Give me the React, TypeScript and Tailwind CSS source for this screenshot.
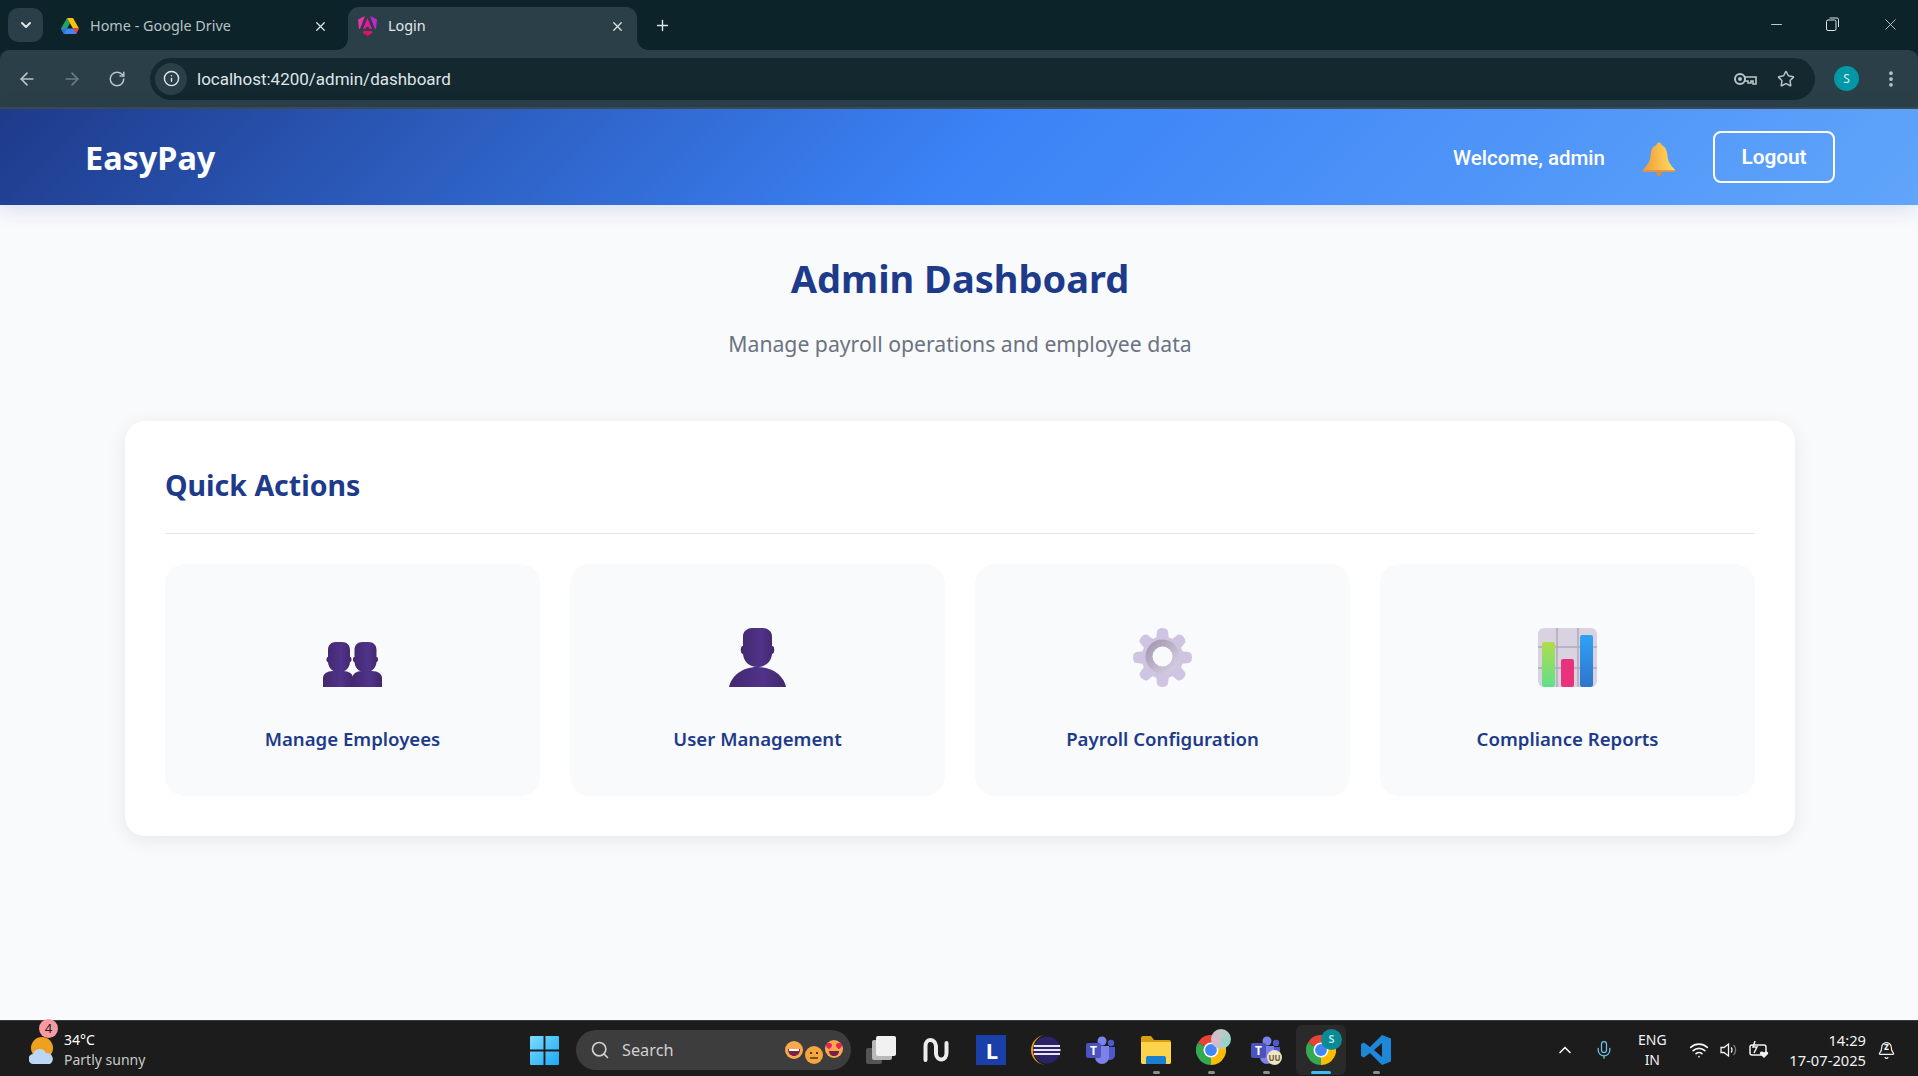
import { ArrowLeft, ArrowRight, Bell, ChevronDown, ChevronUp, EllipsisVertical, Info, Mic, Minus, Plus, RotateCw, Search, Star, Wifi, X } from 'lucide-react';

const segoe = 'font-["Noto_Sans","Open_Sans",sans-serif]';

function DriveIcon() {
  return (
    <svg width="18" height="16" viewBox="0 0 18 16">
      <path d="M6 0 0 10.500 3 16 9 5.200z" fill="#1fa463" />
      <path d="M6 0h6l6 10.500h-6z" fill="#ffc107" />
      <path d="M0 10.500h18L15 16H3z" fill="#4285f4" />
      <path d="M0 10.500h6L3 16z" fill="#2a71d8" />
      <path d="M12 10.500h6L15 16z" fill="#ea4335" />
    </svg>
  );
}

function AngularIcon() {
  return (
    <svg width="19" height="20" viewBox="0 0 19 20">
      <path d="M0 3.500 7 0 2 13 1 13z" fill="#e535ab" />
      <path d="M19 3.500 12 0 17 13 18 13z" fill="#c026d3" />
      <path d="M9.500 2 14 13H11.500L10.700 11H8.300L7.500 13H5z" fill="#f012a0" />
      <path d="M5 15h9v2l-4.500 3L5 17z" fill="#e5125f" />
    </svg>
  );
}

function BrowserChrome() {
  return (
    <div className={`${segoe} shrink-0 bg-[#0c2329]`}>
      <div className="flex h-[50px] items-start pl-[8px] text-[#dfe5e7]">
        <div className="mt-[8px] flex h-[34px] w-[35px] items-center justify-center rounded-[10px] bg-[#2a3f47]">
          <ChevronDown size={16} strokeWidth={3} />
        </div>
        <div className="ml-[8px] flex h-[43px] w-[289px] items-center pb-[5px] pl-[10px] pr-[12px] mt-[7px] text-[#b7c2c5]">
          <span className="flex w-[18px] justify-center"><DriveIcon /></span>
          <span className="ml-[11px] flex-1 text-[14.400px]">Home - Google Drive</span>
          <X size={15} strokeWidth={2} className="text-[#dfe5e7]" />
        </div>
        <div className="relative ml-[8px] mt-[7px] flex h-[43px] w-[289px] items-center rounded-t-[11px] bg-[#2a3f47] pb-[5px] pl-[10px] pr-[12px] text-[#e3e8ea]">
          <span className="absolute bottom-0 left-[-11px] h-[11px] w-[11px] bg-[radial-gradient(circle_at_0_0,transparent_10.500px,#2a3f47_11px)]" />
          <span className="absolute bottom-0 right-[-11px] h-[11px] w-[11px] bg-[radial-gradient(circle_at_100%_0,transparent_10.500px,#2a3f47_11px)]" />
          <span className="flex w-[19px] justify-center"><AngularIcon /></span>
          <span className="ml-[11px] flex-1 text-[14.400px]">Login</span>
          <X size={15} strokeWidth={2} className="text-[#dfe5e7]" />
        </div>
        <Plus size={17} strokeWidth={2} className="ml-[17px] mt-[17px]" />
        <div className="ml-auto flex h-[48px] items-center">
          <Minus size={17} strokeWidth={1.200} />
          <svg width="13" height="14" viewBox="0 0 13 14" fill="none" stroke="#dfe5e7" strokeWidth="1" className="ml-[41px]">
            <rect x="0.500" y="3" width="9.500" height="10.500" rx="1.500" />
            <path d="M3.500 1h7.500a1.500 1.500 0 0 1 1.500 1.500V10" />
          </svg>
          <X size={19} strokeWidth={1} className="ml-[42px] mr-[18px]" />
        </div>
      </div>
      <div className="flex h-[57px] items-center rounded-t-[9px] bg-[#2a3f47] text-[#b9c5c8]">
        <ArrowLeft size={20} strokeWidth={2} className="ml-[17px]" />
        <ArrowRight size={20} strokeWidth={2} className="ml-[25px] text-[#6c7d83]" />
        <RotateCw size={18} strokeWidth={2} className="ml-[26px]" />
        <div className="ml-[24px] flex h-[42px] w-[1665px] items-center rounded-full bg-[#14282f] pl-[5px] pr-[20px]">
          <div className="flex h-[32px] w-[32px] items-center justify-center rounded-full bg-[#2a3f47]">
            <Info size={17} strokeWidth={2} className="text-[#dfe5e7]" />
          </div>
          <span className="ml-[10px] mt-[2px] font-['Roboto',sans-serif] text-[17px] text-[#dfe5e7]">localhost:4200/admin/dashboard</span>
          <svg width="23" height="14" viewBox="0 0 23 14" fill="none" stroke="currentColor" strokeWidth="2" className="ml-auto">
            <circle cx="6" cy="7" r="5" />
            <circle cx="6" cy="7" r="1" />
            <path d="M11 5h11v7h-3V9h-2v2h-3V9h-3" strokeWidth="1.600" />
          </svg>
          <Star size={18} strokeWidth={2} className="ml-[20px]" />
        </div>
        <div className="ml-[19px] flex h-[25px] w-[25px] items-center justify-center rounded-full bg-[#0097a7] text-[12px] text-[#d7f3f6]">S</div>
        <EllipsisVertical size={20} strokeWidth={2.500} className="ml-[22px]" />
      </div>
      <div className="h-[2px] bg-[#3f4a4e]" />
    </div>
  );
}

function GoldBell() {
  return (
    <svg width="34" height="34" viewBox="0 0 34 34">
      <defs>
        <linearGradient id="bell" x1="0" x2="1" y1="0" y2="0">
          <stop offset="0" stopColor="#f09a3a" />
          <stop offset="1" stopColor="#ffdf5e" />
        </linearGradient>
      </defs>
      <path d="M14.500 3a2.500 2.500 0 0 1 5 0c4 1.500 5.500 5 6 11 .4 5 2.500 8.500 8 14.500H.5c5.500-6 7.600-9.500 8-14.500.5-6 2-9.500 6-11z" fill="url(#bell)" />
      <path d="M.5 28.500h33l-1 1.500H1.500z" fill="#ed9038" />
      <circle cx="17" cy="31.500" r="2.500" fill="#e58a34" />
    </svg>
  );
}

function BustDefs() {
  return (
    <defs>
      <linearGradient id="bust" x1="0" x2="1" y1="0" y2="0">
        <stop offset="0" stopColor="#43286f" />
        <stop offset="0.600" stopColor="#50338a" />
        <stop offset="1" stopColor="#42276c" />
      </linearGradient>
    </defs>
  );
}

function UsersIcon() {
  const head = 'M0 8c0-5 3-8 8-8h6c5 0 8 3 8 8v7c2-.5 2 5.500 0 5-.5 6-4 10-11 10S.5 26 0 20c-2 .5-2-5.500 0-5z';
  return (
    <svg width="59" height="59" viewBox="0 0 59 59">
      <BustDefs />
      <path d="M0 59V50c0-4 4-7 10-7h10c6 0 10 3 10 7v9z" fill="url(#bust)" />
      <path d="M29.500 59V50c0-4 3.500-7 9.500-7h10c6 0 10 3 10 7v9z" fill="url(#bust)" />
      <g transform="translate(5 14)"><path d={head} fill="url(#bust)" /></g>
      <g transform="translate(31.500 14)"><path d={head} fill="url(#bust)" /></g>
    </svg>
  );
}

function UserIcon() {
  return (
    <svg width="57" height="59" viewBox="0 0 57 59">
      <BustDefs />
      <path d="M0 59c2-10 12-20 28.500-20S55 49 57 59z" fill="url(#bust)" />
      <path d="M14 8c0-5 5-8 9-8h11c4 0 9 3 9 8v10c3-1 3 8.500 0 8-.5 7-6 13-14.500 13S14.500 33 14 26c-3 .5-3-9 0-8z" fill="url(#bust)" />
    </svg>
  );
}

function GearIcon() {
  const teeth = [0, 45, 90, 135, 180, 225, 270, 315];
  return (
    <svg width="59" height="59" viewBox="0 0 59 59">
      <defs>
        <linearGradient id="ring" x1="0" x2="1" y1="0" y2="1">
          <stop offset="0" stopColor="#9d92ad" />
          <stop offset="1" stopColor="#dcd5e6" />
        </linearGradient>
      </defs>
      {teeth.map((a) => (
        <path key={a} d="M23 12 24 3.500a5.500 3.500 0 0 1 11 0L36 12z" fill="#cfc4e2" transform={`rotate(${a} 29.500 29.500)`} />
      ))}
      <circle cx="29.500" cy="29.500" r="21" fill="#cfc4e2" />
      <circle cx="29.500" cy="28.500" r="17" fill="url(#ring)" />
      <circle cx="29.500" cy="28.500" r="10" fill="#f8fafc" />
    </svg>
  );
}

function ChartIcon() {
  return (
    <svg width="59" height="59" viewBox="0 0 59 59">
      <defs>
        <linearGradient id="g1" x1="0" x2="0" y1="0" y2="1">
          <stop offset="0" stopColor="#b2dc4c" />
          <stop offset="1" stopColor="#5fe08a" />
        </linearGradient>
        <linearGradient id="g2" x1="0" x2="0" y1="0" y2="1">
          <stop offset="0" stopColor="#2fa3f5" />
          <stop offset="1" stopColor="#2f74c9" />
        </linearGradient>
        <clipPath id="chartClip">
          <rect width="59" height="59" rx="6" />
        </clipPath>
      </defs>
      <g clipPath="url(#chartClip)">
        <rect width="59" height="59" fill="#d9d2e0" />
        <path d="M19 0v59M40 0v59M0 19h59M0 40h59" stroke="#b1a8b8" strokeWidth="1.500" />
        <rect x="4" y="14" width="13" height="45" rx="2" fill="url(#g1)" />
        <rect x="23" y="31" width="13" height="28" rx="2" fill="#e8337c" />
        <rect x="42" y="7" width="13" height="52" rx="2" fill="url(#g2)" />
      </g>
    </svg>
  );
}

const actions = [
  { label: 'Manage Employees', icon: <UsersIcon /> },
  { label: 'User Management', icon: <UserIcon /> },
  { label: 'Payroll Configuration', icon: <GearIcon /> },
  { label: 'Compliance Reports', icon: <ChartIcon /> },
];

function Page() {
  return (
    <div className={`${segoe} flex min-h-0 flex-1 flex-col bg-[#f8fafc]`}>
      <header className="flex h-[96px] shrink-0 items-center bg-[linear-gradient(135deg,#1e3a8a_0%,#3b82f6_50%,#60a5fa_100%)] pl-[85px] pr-[83px] text-white shadow-[0_4px_20px_rgba(30,58,138,0.15)]">
        <span className="mt-[1px] text-[32.400px] font-bold">EasyPay</span>
        <span className="ml-auto mt-[2px] font-['Roboto',sans-serif] text-[20.500px] font-medium">Welcome, admin</span>
        <span className="mx-[37px] mt-[3px] flex">
          <GoldBell />
        </span>
        <button className="h-[52px] w-[122px] rounded-[8px] border-2 border-white pt-[1px] font-['Roboto',sans-serif] text-[20.800px] font-semibold">Logout</button>
      </header>
      <main className="flex-1 pl-[2px]">
        <h1 className="mt-[46px] text-center text-[38px] font-bold leading-[54px] text-[#1e3a8a]">Admin Dashboard</h1>
        <p className="mt-[23px] text-center text-[21.200px] leading-[32px] text-[#6b7280]">Manage payroll operations and employee data</p>
        <section className="mx-auto mt-[61px] w-[1670px] rounded-[20px] bg-white p-[40px] shadow-[0_4px_20px_rgba(0,0,0,0.08)]">
          <h2 className="border-b border-[#e5e7eb] pb-[25px] pt-[2px] text-[28.500px] font-bold leading-[45px] text-[#1e3a8a]">Quick Actions</h2>
          <div className="mt-[30px] grid grid-cols-4 gap-[30px]">
            {actions.map((a) => (
              <div key={a.label} className="flex h-[232px] flex-col items-center rounded-[20px] bg-[#f8fafc] pt-[64px]">
                <div className="flex h-[59px] items-center justify-center">{a.icon}</div>
                <div className="mt-[38px] text-[18.600px] font-semibold leading-[28px] text-[#1e3a8a]">{a.label}</div>
              </div>
            ))}
          </div>
        </section>
      </main>
    </div>
  );
}

function ChromeGlyph() {
  return (
    <svg width="30" height="30" viewBox="0 0 32 32">
      <path d="M16 16 2.100 8A16 16 0 0 1 29.900 8z" fill="#ea4335" />
      <path d="M16 16 2.100 8A16 16 0 0 0 16 32z" fill="#34a853" />
      <path d="M16 16 29.900 8A16 16 0 0 1 16 32z" fill="#fbbc04" />
      <circle cx="16" cy="16" r="8" fill="#fff" />
      <circle cx="16" cy="16" r="6.300" fill="#4285f4" />
    </svg>
  );
}

function TeamsGlyph() {
  return (
    <svg width="30" height="28" viewBox="0 0 30 28">
      <circle cx="16" cy="5" r="4.500" fill="#7b83eb" />
      <circle cx="25" cy="7" r="3.200" fill="#5059c9" />
      <path d="M20 11h9v8a5 5 0 0 1-5 5h-4z" fill="#5059c9" />
      <path d="M9 10h14v11a7 7 0 0 1-14 0z" fill="#7b83eb" />
      <rect x="0" y="7" width="15" height="15" rx="2" fill="#4b53bc" />
      <text x="7.500" y="19" textAnchor="middle" fontSize="12" fontWeight="700" fill="#fff" fontFamily="Noto Sans, sans-serif">T</text>
    </svg>
  );
}

function Slot({ children, dot, active }: { children: React.ReactNode; dot?: boolean; active?: boolean }) {
  return (
    <div className="relative flex h-[50px] w-[55px] items-center justify-center">
      {active && <span className="absolute inset-y-0 left-[2.500px] w-[50px] rounded-[6px] bg-[#2a2a2a]" />}
      <span className="relative flex">{children}</span>
      {dot && <span className="absolute bottom-[1px] h-[3px] w-[7px] rounded-full bg-[#8e8e8e]" />}
      {active && <span className="absolute bottom-[1px] h-[3px] w-[20px] rounded-full bg-[#3fbdf6]" />}
    </div>
  );
}

function Face({ mood }: { mood: 'grin' | 'flat' | 'love' }) {
  return (
    <svg width="18" height="18" viewBox="0 0 18 18">
      <circle cx="9" cy="9" r="9" fill={mood === 'flat' ? '#f5a63d' : '#f8a94f'} />
      {mood === 'grin' && <path d="M3 8h12c0 5-3 7-6 7s-6-2-6-7z" fill="#7b1f4a" />}
      {mood === 'grin' && <path d="M4 8h10v2H4z" fill="#fff" />}
      {mood === 'flat' && <path d="M5 12h8" stroke="#5b3316" strokeWidth="1.500" />}
      {mood === 'flat' && <path d="M5 7h2M11 7h2" stroke="#5b3316" strokeWidth="2" />}
      {mood === 'love' && <path d="M1 5c1-3 5-3 6 0 .5 2-3 4-3 4S.5 7 1 5zM11 5c1-3 5-3 6 0 .5 2-3 4-3 4s-3.500-2-3-4z" fill="#e8225f" />}
      {mood === 'love' && <path d="M4 11h10c0 3-2 5-5 5s-5-2-5-5z" fill="#7b1f4a" />}
    </svg>
  );
}

function Taskbar() {
  return (
    <footer className={`${segoe} flex h-[56px] shrink-0 items-center border-t border-[#3a3a3a] bg-[#1c1c1c] pt-[3px] text-white`}>
      <div className="relative flex w-[517px] shrink-0 items-center pl-[29px]">
        <svg width="26" height="27" viewBox="0 0 26 27">
          <circle cx="13" cy="11" r="11" fill="#f0a020" />
          <path d="M5 27a5 5 0 0 1-1-10 7 7 0 0 1 13-1 6 6 0 0 1 4 11z" fill="#bcd7f5" />
        </svg>
        <span className="absolute left-[39px] top-[-11px] flex h-[19px] w-[19px] items-center justify-center rounded-full bg-[#f79aa2] text-[13px] text-[#1c1c1c]">4</span>
        <div className="ml-[9px] text-[14px] leading-[20px]">
          <div>34°C</div>
          <div className="text-[#c9c9c9]">Partly sunny</div>
        </div>
      </div>
      <div className="flex items-center">
        <div className="flex w-[55px] justify-center">
          <svg width="29" height="29" viewBox="0 0 30 30">
            <defs>
              <linearGradient id="win" x1="0" x2="1" y1="0" y2="1">
                <stop offset="0" stopColor="#7ddcff" />
                <stop offset="1" stopColor="#1aa9f5" />
              </linearGradient>
            </defs>
            <path d="M0 1a1 1 0 0 1 1-1h13v14H0zM16 0h13a1 1 0 0 1 1 1v13H16zM0 16h14v14H1a1 1 0 0 1-1-1zM16 16h14v13a1 1 0 0 1-1 1H16z" fill="url(#win)" />
          </svg>
        </div>
        <div className="ml-[4px] flex h-[40px] w-[275px] items-center rounded-full bg-[#3d3d3d] pl-[14px] pr-[8px] text-[#d0d0d0]">
          <Search size={20} strokeWidth={2} />
          <span className="ml-[12px] text-[16.300px]">Search</span>
          <div className="ml-auto flex items-center gap-[2px]">
            <span className="flex"><Face mood="grin" /></span>
            <span className="flex translate-y-[5px]"><Face mood="flat" /></span>
            <span className="flex -translate-y-[1px]"><Face mood="love" /></span>
          </div>
        </div>
        <div className="ml-[2.500px]">
          <Slot>
            <svg width="30" height="28" viewBox="0 0 30 28">
              <rect x="0" y="12" width="16" height="16" rx="2" fill="#555" />
              <rect x="6" y="4" width="20" height="20" rx="2" fill="#b8b8b8" />
              <rect x="10" y="0" width="20" height="20" rx="2" fill="#f1f1f1" />
            </svg>
          </Slot>
        </div>
        <Slot>
          <svg width="26" height="26" viewBox="0 0 26 26" fill="none" stroke="#ececec" strokeWidth="4" strokeLinecap="round">
            <path d="M2.500 23V9c0-8 9.500-8 10.500 0v8c1 8 10.500 7 10.500-1V6" />
          </svg>
        </Slot>
        <Slot>
          <svg width="30" height="30" viewBox="0 0 30 30">
            <rect width="30" height="30" fill="#1b3fa8" />
            <text x="16" y="24" textAnchor="middle" fontSize="22" fontWeight="700" fill="#fff" fontFamily="Noto Sans, sans-serif">L</text>
          </svg>
        </Slot>
        <Slot>
          <svg width="30" height="30" viewBox="0 0 30 30">
            <path d="M15 0a15 15 0 0 0 0 30 13 15 0 0 1 0-30z" fill="#f29a1f" />
            <circle cx="16" cy="15" r="13.500" fill="#2b2367" />
            <path d="M3 11h26M2.500 15h27M3 19h26" stroke="#e6e3f2" strokeWidth="2" />
          </svg>
        </Slot>
        <Slot>
          <TeamsGlyph />
        </Slot>
        <Slot dot>
          <svg width="30" height="28" viewBox="0 0 30 28">
            <path d="M0 2a2 2 0 0 1 2-2h8l3 4h15a2 2 0 0 1 2 2v20a2 2 0 0 1-2 2H2a2 2 0 0 1-2-2z" fill="#d99e12" />
            <path d="M0 6h30v20a2 2 0 0 1-2 2H2a2 2 0 0 1-2-2z" fill="#fcd34d" />
            <path d="M5 22a2 2 0 0 1 2-2h16a2 2 0 0 1 2 2v6H5z" fill="#1a7fd0" />
          </svg>
        </Slot>
        <Slot dot>
          <ChromeGlyph />
          <span className="absolute right-[-5px] top-[-6px] h-[20px] w-[20px] rounded-full bg-[conic-gradient(#c6c6c6,#8fd4c8,#d8b8d0,#c6c6c6)]" />
        </Slot>
        <Slot dot>
          <TeamsGlyph />
          <span className="absolute bottom-[-1px] right-[-1px] flex h-[15px] w-[15px] items-center justify-center rounded-full bg-[#efe3c8] text-[8px] font-bold text-[#6b5a33]">UU</span>
        </Slot>
        <Slot active>
          <ChromeGlyph />
          <span className="absolute right-[-6px] top-[-6px] flex h-[21px] w-[21px] items-center justify-center rounded-full bg-[#0b8a96] text-[11px] font-semibold text-[#b8eef3]">S</span>
        </Slot>
        <Slot dot>
          <svg width="30" height="30" viewBox="0 0 30 30">
            <path d="M21 0 9 12 3 7.500 0 9v12l3 1.500L9 18l12 12 9-3.500V3.500zM21 8v14l-8-7z" fill="#1e88d8" />
          </svg>
        </Slot>
      </div>
      <div className="ml-auto flex items-center pr-[22px] text-[#f2f2f2]">
        <ChevronUp size={20} strokeWidth={2} />
        <Mic size={20} strokeWidth={1.500} className="ml-[19px] text-[#6cc5e8]" />
        <div className="ml-[20px] w-[36px] text-center text-[14px] leading-[20px]">
          <div>ENG</div>
          <div>IN</div>
        </div>
        <Wifi size={20} strokeWidth={2} className="ml-[19px]" />
        <svg width="20" height="20" viewBox="0 0 20 20" fill="none" stroke="currentColor" strokeWidth="1.300" className="ml-[10px]">
          <path d="M2 7.500h3L9.500 4v12L5 12.500H2z" />
          <path d="M12 7.500a3.500 3.500 0 0 1 0 5" />
          <path d="M14.500 5a7 7 0 0 1 0 10" stroke="#7a7a7a" />
        </svg>
        <svg width="20" height="18" viewBox="0 0 20 18" fill="none" stroke="currentColor" strokeWidth="1.500" className="ml-[10px]">
          <rect x="1" y="4" width="16" height="10" rx="2" />
          <path d="M6 0 4 6h4l-3 6" />
          <path d="M15 17l-4-4c-1-2 2-3.500 4-1.500 2-2 5-.5 4 1.500z" fill="currentColor" stroke="none" />
        </svg>
        <div className="ml-[20px] text-right text-[14.700px] leading-[20px]">
          <div>14:29</div>
          <div>17-07-2025</div>
        </div>
        <span className="relative ml-[11px] flex">
          <Bell size={19} strokeWidth={1.500} />
          <span className="absolute left-[7px] top-[-1px] text-[10px] font-bold leading-[12px]">z</span>
        </span>
      </div>
    </footer>
  );
}

export default function App() {
  return (
    <div className="flex h-screen flex-col overflow-hidden">
      <BrowserChrome />
      <Page />
      <Taskbar />
    </div>
  );
}
